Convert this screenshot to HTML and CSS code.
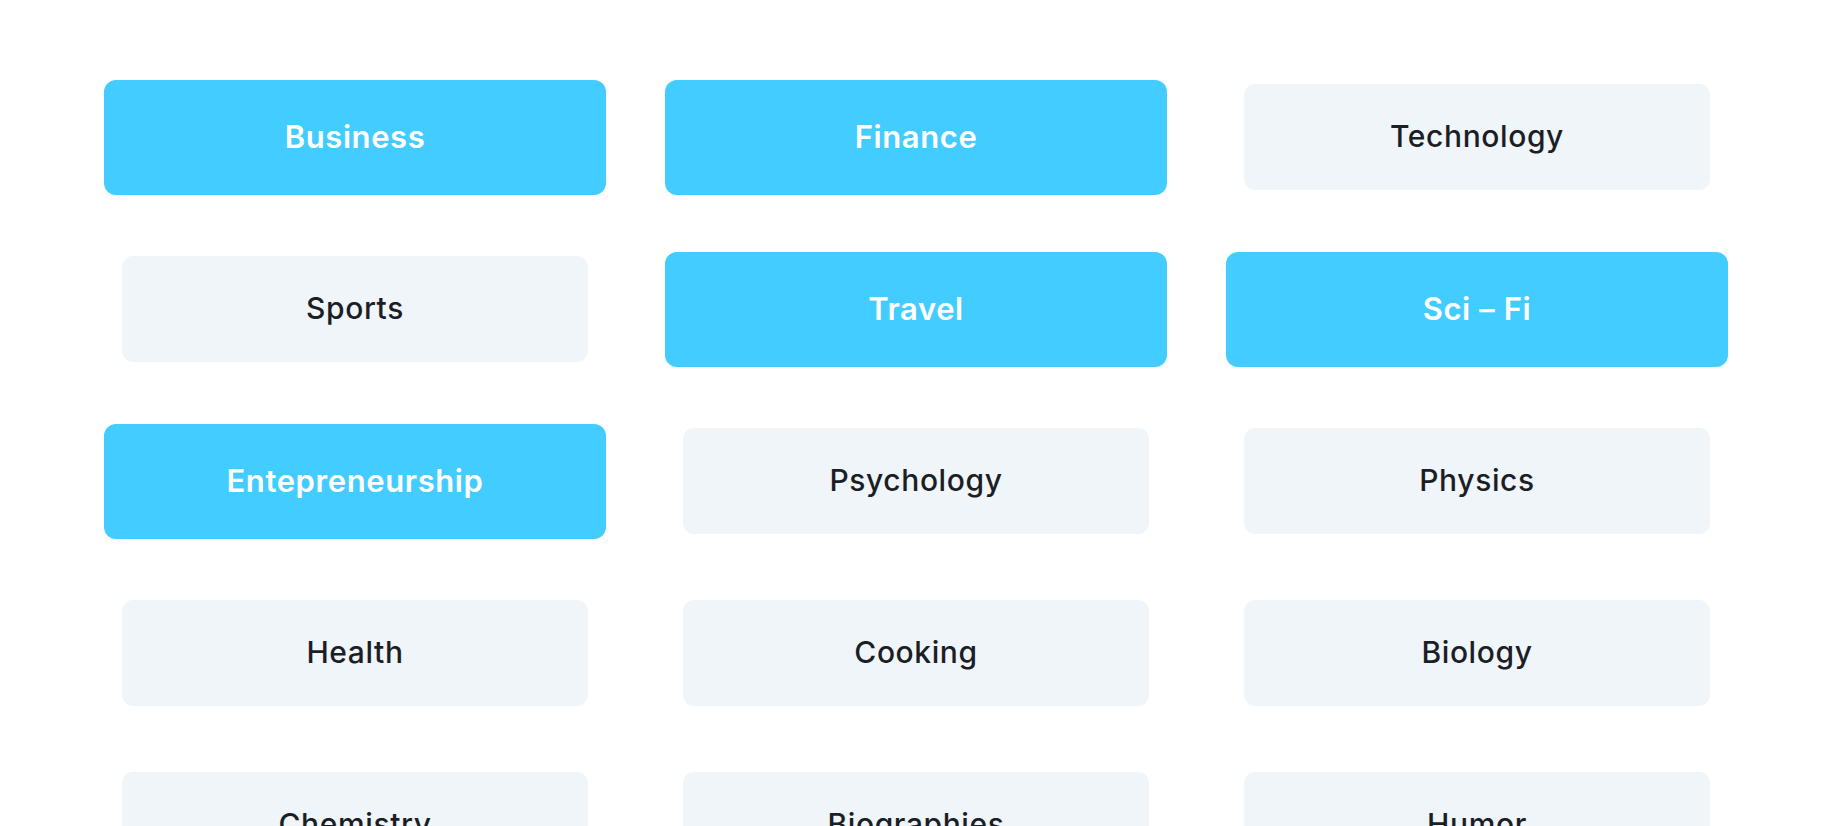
FILE: index.html
```html
<!DOCTYPE html>
<html lang="en">
<head>
<meta charset="utf-8">
<title>Topics</title>
<link rel="stylesheet" href="styles.css">
</head>
<body>
<main class="topics">
  <div class="chip chip--on">Business</div>
  <div class="chip chip--on">Finance</div>
  <div class="chip">Technology</div>
  <div class="chip">Sports</div>
  <div class="chip chip--on">Travel</div>
  <div class="chip chip--on">Sci – Fi</div>
  <div class="chip chip--on">Entepreneurship</div>
  <div class="chip">Psychology</div>
  <div class="chip">Physics</div>
  <div class="chip">Health</div>
  <div class="chip">Cooking</div>
  <div class="chip">Biology</div>
  <div class="chip">Chemistry</div>
  <div class="chip">Biographies</div>
  <div class="chip">Humor</div>
</main>
</body>
</html>
```
FILE: styles.css
```css
html, body {
  margin: 0;
  padding: 0;
  background: #ffffff;
}

body {
  font-family: Inter, "Open Sans", sans-serif;
  color: #1b1e25;
}

.topics {
  display: grid;
  grid-template-columns: repeat(3, 466px);
  grid-auto-rows: 106px;
  column-gap: 95px;
  row-gap: 66px;
  padding: 84px 0 0 122px;
}

.chip {
  display: flex;
  align-items: center;
  justify-content: center;
  padding-bottom: 3px;
  box-sizing: border-box;
  background: #f0f5fa;
  border-radius: 11px;
  font-size: 30px;
  font-weight: 500;
  letter-spacing: 0.6px;
}

.chip--on {
  margin: -4px -18px -5px;
  background: #43ccff;
  color: #ffffff;
  font-weight: 600;
  font-size: 31px;
  border-radius: 12px;
}
```
